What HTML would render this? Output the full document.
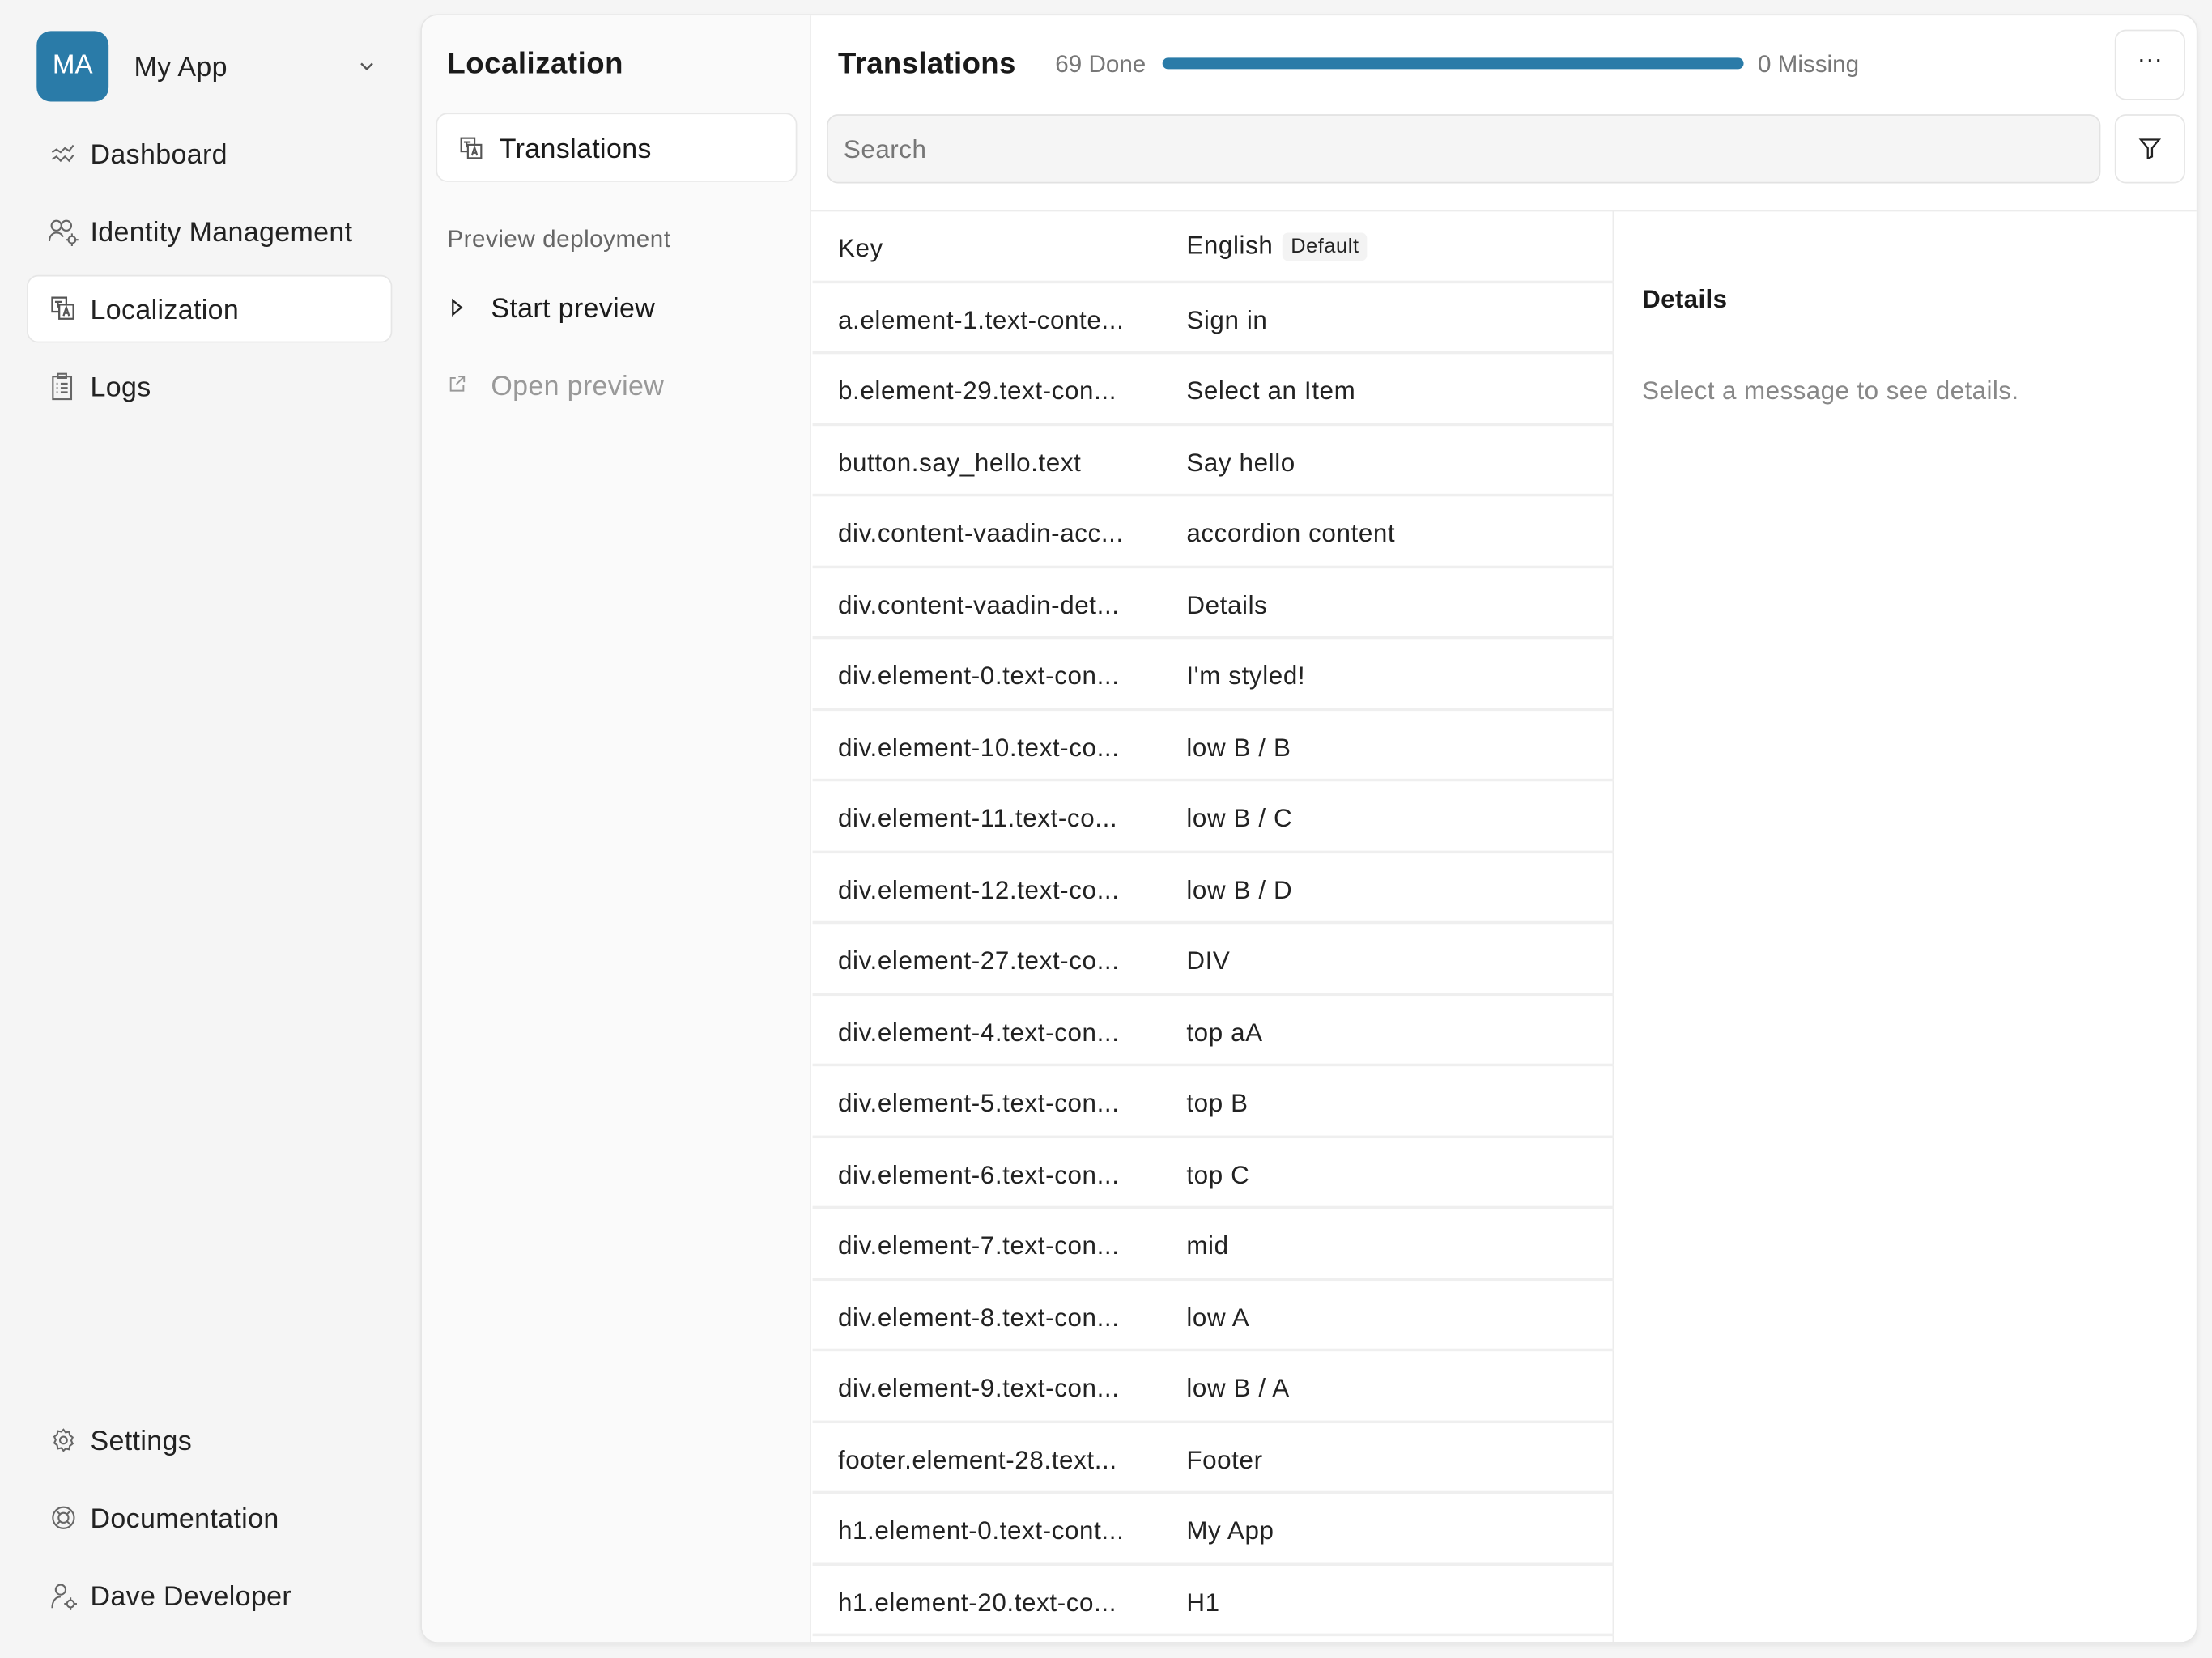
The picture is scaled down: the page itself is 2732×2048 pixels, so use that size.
<!DOCTYPE html>
<html><head><meta charset="utf-8"><style>
html,body{margin:0;padding:0;width:2732px;height:2048px;overflow:hidden;background:#f5f5f5}
#s{position:absolute;left:0;top:0;width:1568px;height:1175px;transform:scale(1.74235);transform-origin:0 0;font-family:"Liberation Sans",sans-serif;color:#1f1f1f}
.a{position:absolute;white-space:nowrap}
.nav{font-size:19.5px;font-weight:500;color:#222;line-height:22px;letter-spacing:0.2px}
.ic{position:absolute}
.row{position:absolute;left:0;width:568px;height:50.5px;border-bottom:2px solid #efefef;box-sizing:border-box;font-size:18px;color:#222;letter-spacing:0.35px}
.row span{position:absolute;top:16px;white-space:nowrap}
.k{left:18px}.v{left:265px}
</style></head><body><div id="s">
<div class="a" style="left:26px;top:22px;width:51px;height:50px;background:#2a7ba8;border-radius:10px;color:#fff;font-size:19px;line-height:50px;text-align:center">MA</div>
<div class="a nav" style="left:95px;top:37px;font-size:19.5px">My App</div>
<svg class="ic" style="left:254px;top:42px" width="12" height="10" viewBox="0 0 12 10"><path d="M2 3l4 4 4-4" fill="none" stroke="#555" stroke-width="1.4"/></svg>

<svg class="ic" style="left:36px;top:101px" width="18" height="16" viewBox="0 0 18 16" fill="none" stroke="#666" stroke-width="1.2"><path d="M1 7l3-2 3 2 3-3 3 2 3-4"/><path d="M1 12l3-2 3 3 3-3 3 3 3-4"/></svg>
<div class="a nav" style="left:64px;top:99px">Dashboard</div>
<svg class="ic" style="left:34px;top:155px" width="22" height="20" viewBox="0 0 22 20" fill="none" stroke="#666" stroke-width="1.2"><circle cx="6" cy="5" r="3.5"/><circle cx="13" cy="5" r="3.5"/><path d="M1 16c0-4 2.5-6 5-6s4 1 4.5 3"/><circle cx="17" cy="15" r="2.5"/><path d="M17 10.5v2M17 17.5v2M12.5 15h2M19.5 15h2"/></svg>
<div class="a nav" style="left:64px;top:154px">Identity Management</div>
<div class="a" style="left:19px;top:195px;width:259px;height:48px;background:#fff;border:1px solid #e6e6e6;border-radius:8px;box-sizing:border-box"></div>
<svg class="ic" style="left:36px;top:210px" width="18" height="18" viewBox="0 0 18 18" fill="none" stroke="#555" stroke-width="1.3"><rect x="1" y="1" width="10" height="10"/><rect x="6" y="6" width="10" height="10" fill="#fff"/><path d="M3 4h5M5 4v4M9 14l2-6 2 6M10 12h2"/></svg>
<div class="a nav" style="left:64px;top:209px">Localization</div>
<svg class="ic" style="left:36px;top:264px" width="16" height="20" viewBox="0 0 16 20" fill="none" stroke="#666" stroke-width="1.2"><rect x="1.5" y="3" width="13" height="16"/><rect x="5" y="1" width="6" height="3"/><path d="M4 8h1M7 8h5M4 11h1M7 11h5M4 14h1M7 14h5"/></svg>
<div class="a nav" style="left:64px;top:264px">Logs</div>

<svg class="ic" style="left:36px;top:1012px" width="18" height="18" viewBox="0 0 18 18" fill="none" stroke="#666" stroke-width="1.2"><circle cx="9" cy="9" r="2.5"/><path d="M9 1.5l1.5 2 2.5-.5.5 2.5 2 1.5-1 2.3 1 2.2-2 1.5-.5 2.5-2.5-.5L9 16.5l-1.5-2-2.5.5-.5-2.5-2-1.5 1-2.2-1-2.3 2-1.5.5-2.5 2.5.5z"/></svg>
<div class="a nav" style="left:64px;top:1011px">Settings</div>
<svg class="ic" style="left:36px;top:1067px" width="18" height="18" viewBox="0 0 18 18" fill="none" stroke="#666" stroke-width="1.2"><circle cx="9" cy="9" r="7.5"/><circle cx="9" cy="9" r="3.5"/><path d="M4 4l2.5 2.5M14 4l-2.5 2.5M4 14l2.5-2.5M14 14l-2.5-2.5"/></svg>
<div class="a nav" style="left:64px;top:1066px">Documentation</div>
<svg class="ic" style="left:36px;top:1122px" width="20" height="20" viewBox="0 0 20 20" fill="none" stroke="#666" stroke-width="1.2"><circle cx="7" cy="5" r="3.5"/><path d="M1 18c0-5 2.5-8 6-8"/><circle cx="14" cy="15" r="2.5"/><path d="M14 10.5v2M14 17.5v2M9.5 15h2M16.5 15h2"/></svg>
<div class="a nav" style="left:64px;top:1121px">Dave Developer</div>

<div class="a" style="left:298px;top:10px;width:1260px;height:1155px;background:#fff;border:1px solid #e6e6e6;border-radius:12px;box-sizing:border-box;overflow:hidden;box-shadow:0 2px 4px rgba(0,0,0,0.06)">
  <div class="a" style="left:0;top:0;width:276px;height:1155px;background:#fafafa;border-right:1px solid #ececec;box-sizing:border-box"></div>
  <div class="a" style="left:18px;top:23px;font-size:21px;font-weight:bold;color:#1a1a1a;letter-spacing:0.3px">Localization</div>
  <div class="a" style="left:10px;top:69px;width:256px;height:49px;background:#fff;border:1px solid #e8e8e8;border-radius:8px;box-sizing:border-box"></div>
  <svg class="ic" style="left:27px;top:86px" width="17" height="17" viewBox="0 0 18 18" fill="none" stroke="#555" stroke-width="1.3"><rect x="1" y="1" width="10" height="10"/><rect x="6" y="6" width="10" height="10" fill="#fff"/><path d="M3 4h5M5 4v4M9 14l2-6 2 6M10 12h2"/></svg>
  <div class="a nav" style="left:55px;top:84px;color:#1a1a1a">Translations</div>
  <div class="a" style="left:18px;top:149px;font-size:17px;color:#666;letter-spacing:0.3px">Preview deployment</div>
  <svg class="ic" style="left:20px;top:200px" width="10" height="14" viewBox="0 0 10 14"><path d="M2 2l6 5-6 5z" fill="none" stroke="#222" stroke-width="1.3"/></svg>
  <div class="a nav" style="left:49px;top:197px;color:#1a1a1a">Start preview</div>
  <svg class="ic" style="left:19px;top:255px" width="12" height="12" viewBox="0 0 12 12" fill="none" stroke="#999" stroke-width="1.1"><path d="M5 2H1.5v9h9V7M7 1h4v4M11 1L5.5 6.5"/></svg>
  <div class="a nav" style="left:49px;top:252px;color:#999">Open preview</div>

  <div class="a" style="left:295px;top:23px;font-size:21px;font-weight:bold;color:#1a1a1a;letter-spacing:0.2px">Translations</div>
  <div class="a" style="left:449px;top:25px;font-size:17px;color:#777">69 Done</div>
  <div class="a" style="left:525px;top:30px;width:412px;height:8px;background:#2a7ba8;border-radius:4px"></div>
  <div class="a" style="left:947px;top:25px;font-size:17px;color:#777">0 Missing</div>
  <div class="a" style="left:1200px;top:10px;width:50px;height:50px;border:1px solid #e6e6e6;border-radius:8px;box-sizing:border-box;text-align:center;line-height:40px;font-size:18px;color:#222">···</div>
  <div class="a" style="left:287px;top:70px;width:903px;height:49px;background:#f5f5f5;border:1px solid #e2e2e2;border-radius:8px;box-sizing:border-box"></div>
  <div class="a" style="left:299px;top:85px;font-size:18px;color:#777;letter-spacing:0.3px">Search</div>
  <div class="a" style="left:1200px;top:70px;width:50px;height:49px;border:1px solid #e6e6e6;border-radius:8px;box-sizing:border-box"></div>
  <svg class="ic" style="left:1217px;top:86px" width="16" height="16" viewBox="0 0 16 16" fill="none" stroke="#222" stroke-width="1.3"><path d="M1.5 2h13L9.5 8v6l-3 1.5V8z"/></svg>
  <div class="a" style="left:276px;top:138px;width:984px;height:1px;background:#ececec"></div>
  <div class="a" style="left:844px;top:138px;width:1px;height:1017px;background:#ececec"></div>
  <div class="a" style="left:865px;top:191px;font-size:18px;font-weight:bold;color:#1a1a1a;letter-spacing:0.2px">Details</div>
  <div class="a" style="left:865px;top:256px;font-size:18px;color:#888;letter-spacing:0.25px">Select a message to see details.</div>

  <div class="a" style="left:277px;top:139px;width:567px;height:1020px">
    <div class="row" style="top:0"><span class="k">Key</span><span class="v" style="top:14px">English</span><span style="left:333px;top:15px;background:#f3f3f3;border-radius:4px;padding:2px 6px;font-size:14.5px;font-weight:500">Default</span></div>
    <div class="row" style="top:50.5px"><span class="k">a.element-1.text-conte...</span><span class="v">Sign in</span></div>
    <div class="row" style="top:101px"><span class="k">b.element-29.text-con...</span><span class="v">Select an Item</span></div>
    <div class="row" style="top:151.5px"><span class="k">button.say_hello.text</span><span class="v">Say hello</span></div>
    <div class="row" style="top:202px"><span class="k">div.content-vaadin-acc...</span><span class="v">accordion content</span></div>
    <div class="row" style="top:252.5px"><span class="k">div.content-vaadin-det...</span><span class="v">Details</span></div>
    <div class="row" style="top:303px"><span class="k">div.element-0.text-con...</span><span class="v">I'm styled!</span></div>
    <div class="row" style="top:353.5px"><span class="k">div.element-10.text-co...</span><span class="v">low B / B</span></div>
    <div class="row" style="top:404px"><span class="k">div.element-11.text-co...</span><span class="v">low B / C</span></div>
    <div class="row" style="top:454.5px"><span class="k">div.element-12.text-co...</span><span class="v">low B / D</span></div>
    <div class="row" style="top:505px"><span class="k">div.element-27.text-co...</span><span class="v">DIV</span></div>
    <div class="row" style="top:555.5px"><span class="k">div.element-4.text-con...</span><span class="v">top aA</span></div>
    <div class="row" style="top:606px"><span class="k">div.element-5.text-con...</span><span class="v">top B</span></div>
    <div class="row" style="top:656.5px"><span class="k">div.element-6.text-con...</span><span class="v">top C</span></div>
    <div class="row" style="top:707px"><span class="k">div.element-7.text-con...</span><span class="v">mid</span></div>
    <div class="row" style="top:757.5px"><span class="k">div.element-8.text-con...</span><span class="v">low A</span></div>
    <div class="row" style="top:808px"><span class="k">div.element-9.text-con...</span><span class="v">low B / A</span></div>
    <div class="row" style="top:858.5px"><span class="k">footer.element-28.text...</span><span class="v">Footer</span></div>
    <div class="row" style="top:909px"><span class="k">h1.element-0.text-cont...</span><span class="v">My App</span></div>
    <div class="row" style="top:959.5px"><span class="k">h1.element-20.text-co...</span><span class="v">H1</span></div>
  </div>
</div>
</div></body></html>
